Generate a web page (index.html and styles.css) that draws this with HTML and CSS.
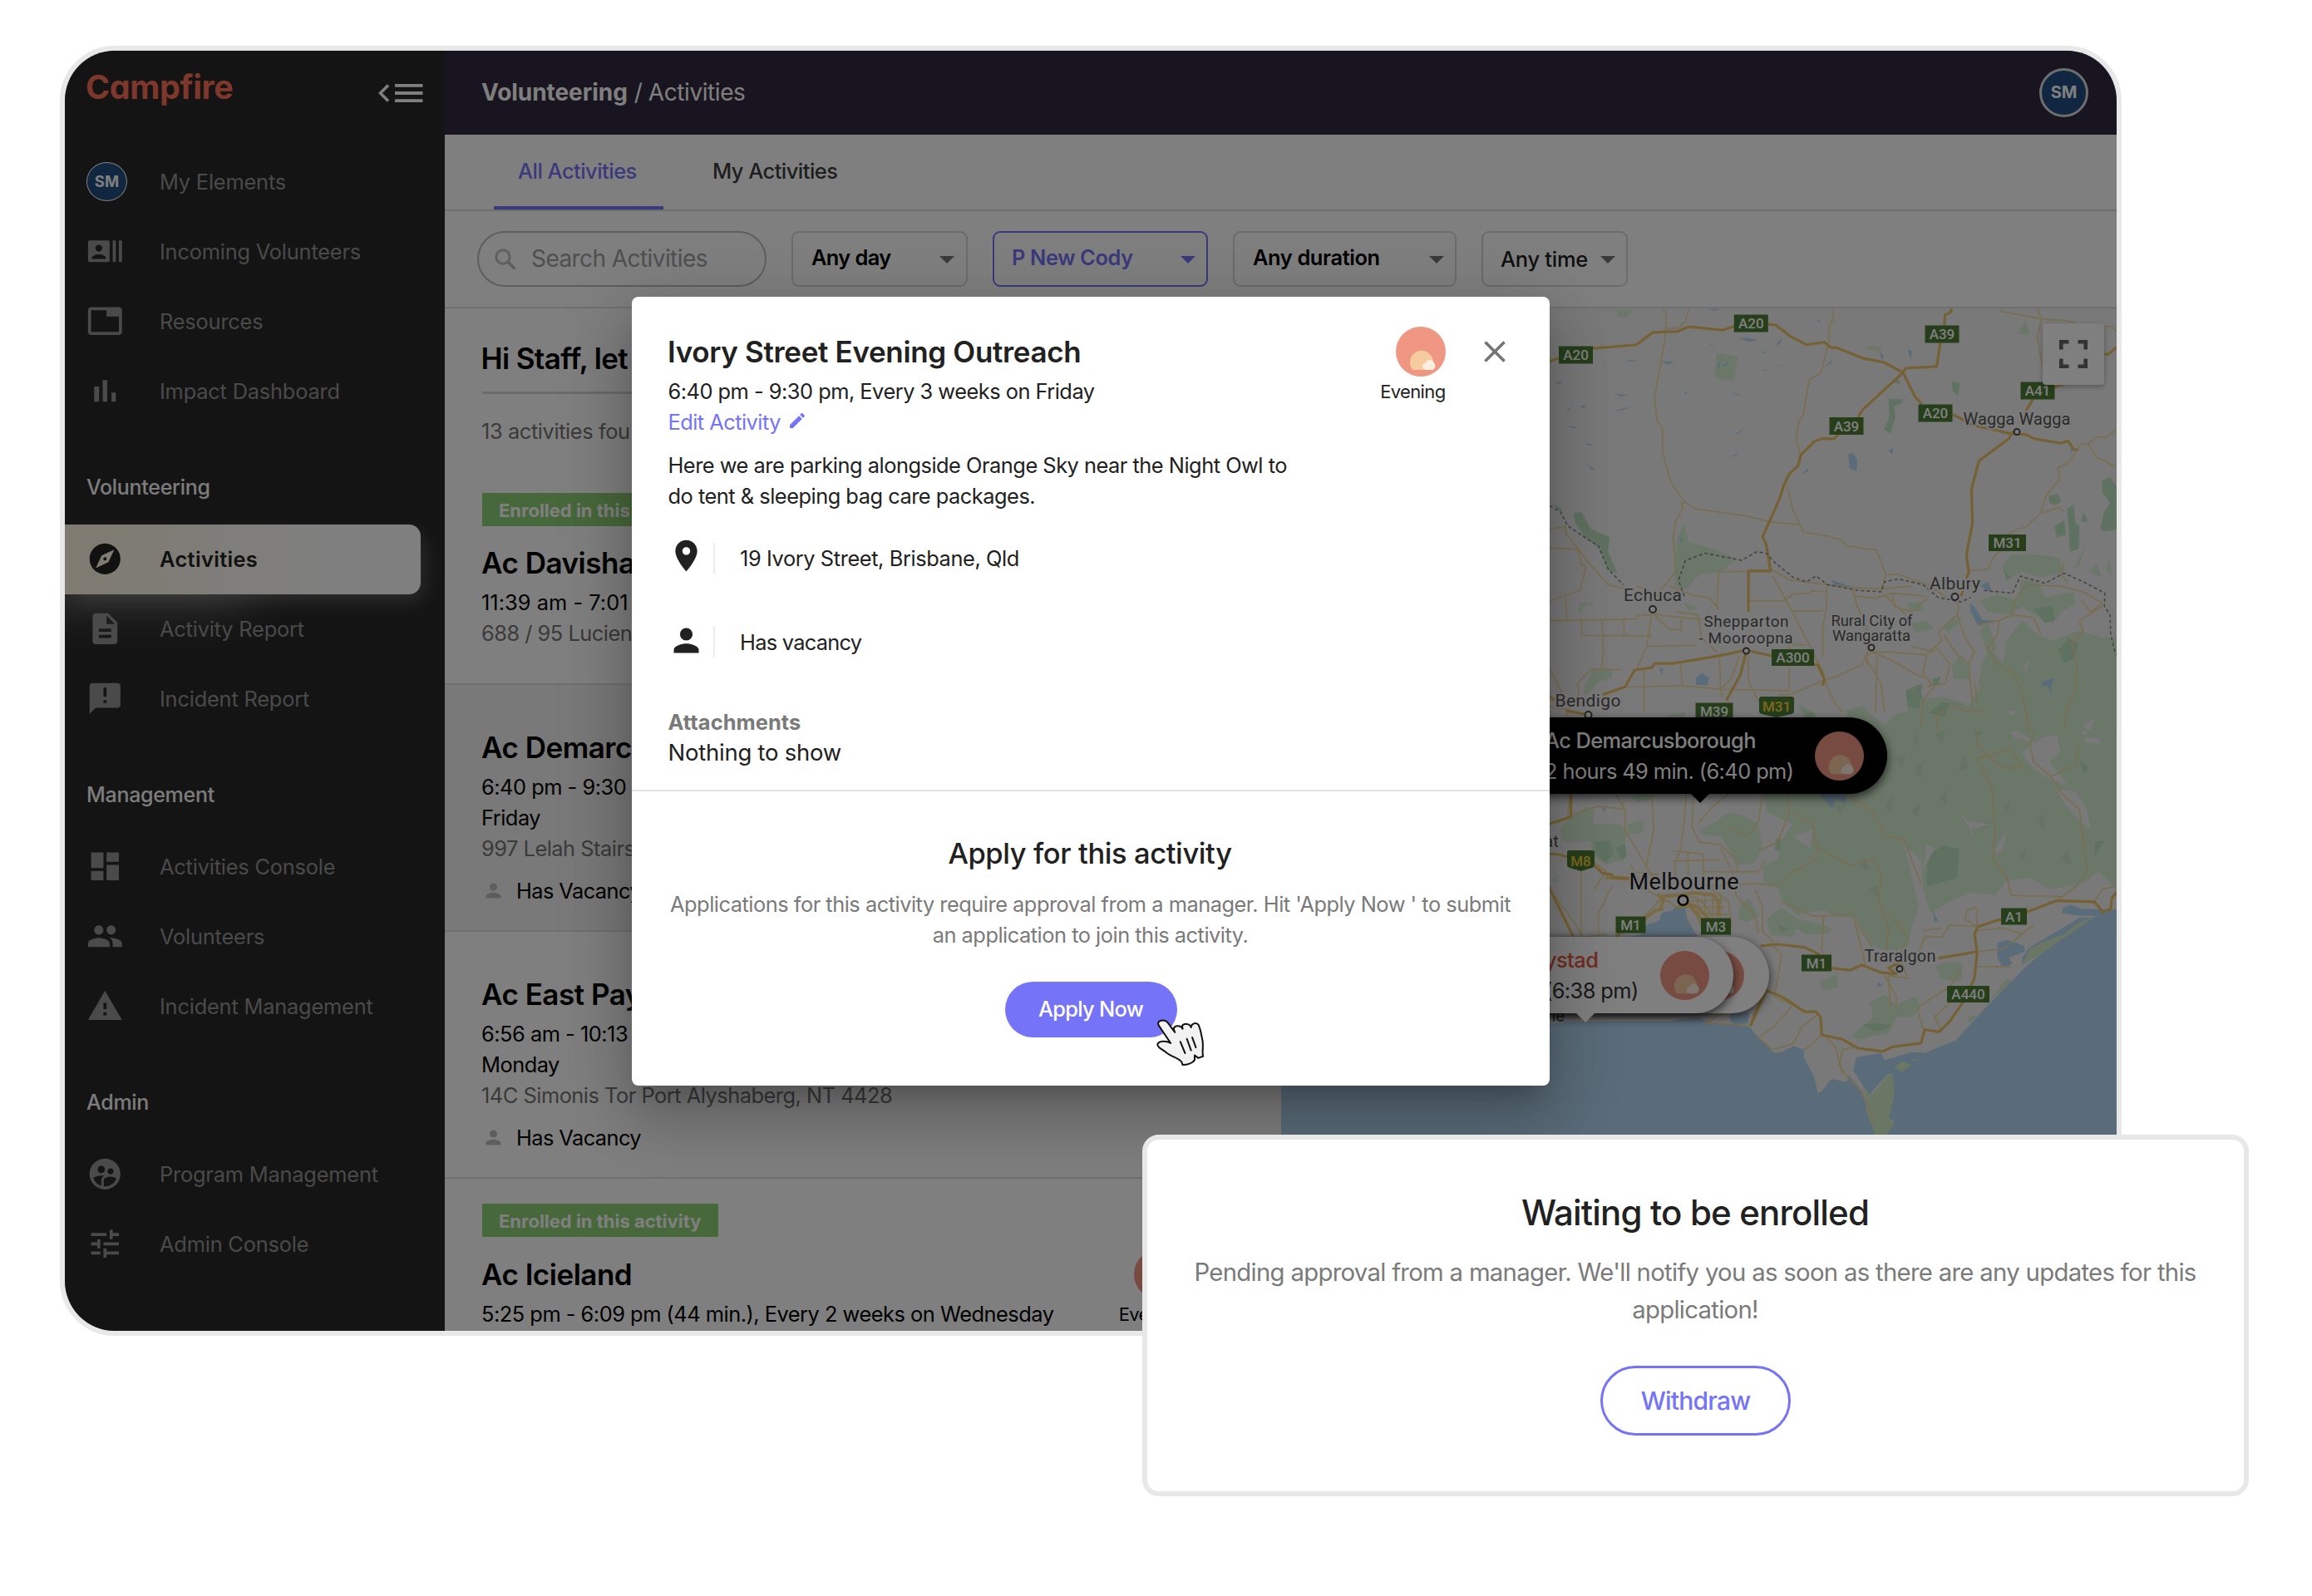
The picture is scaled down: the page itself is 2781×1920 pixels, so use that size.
FILE: index.html
```html
<!DOCTYPE html>
<html lang="en">
<head>
<meta charset="utf-8">
<title>Campfire – Activities</title>
<link rel="stylesheet" href="styles.css">
</head>
<body>
<svg class="defs" width="0" height="0">
  <symbol id="evening" viewBox="0 0 60 60">
    <circle cx="30" cy="30" r="30" fill="#ef9783"/>
    <path d="M20.4 52a14 14 0 1 1 21.2 0z" fill="#f6cba0"/>
    <path d="M35.3 52a4.5 4.5 0 0 1 .4-8.600a5.500 5.500 0 0 1 10-.4a5.600 5.600 0 0 1-1.200 9z" fill="#fcefe0"/>
  </symbol>
  <symbol id="person" viewBox="0 0 24 24"><path d="M12 12c2.210 0 4-1.790 4-4s-1.790-4-4-4-4 1.790-4 4 1.790 4 4 4zm0 2c-2.670 0-8 1.340-8 4v2h16v-2c0-2.660-5.330-4-8-4z"/></symbol>
</svg>
<div class="page">
  <div class="window">
    <aside class="sidebar">
      <div class="brand-row">
        <span class="brand">Campfire</span>
        <svg class="collapse" viewBox="0 0 54 22"><path d="M12 1.500 2.500 11 12 20.500" fill="none" stroke="#fff" stroke-width="3.600"/><path d="M20 0h33.500v3.800H20zM20 9.100h33.500v3.800H20zM20 18.200h33.500V22H20z" fill="#fff"/></svg>
      </div>
      <nav class="nav">
        <a class="item"><span class="avatar small">SM</span>My Elements</a>
        <a class="item"><svg class="ico" viewBox="0 0 24 24"><path d="M21 5v14h2V5h-2zm-4 14h2V5h-2v14zM14 5H2c-.55 0-1 .45-1 1v12c0 .55.45 1 1 1h12c.55 0 1-.45 1-1V6c0-.55-.45-1-1-1zM8 7.750c1.240 0 2.250 1.010 2.250 2.250S9.240 12.250 8 12.250 5.750 11.240 5.750 10 6.760 7.750 8 7.750zM12.500 17h-9v-.75c0-1.500 3-2.250 4.500-2.250s4.500.75 4.500 2.250V17z"/></svg>Incoming Volunteers</a>
        <a class="item"><svg class="ico" viewBox="0 0 24 24"><path d="M21 3H3c-1.100 0-2 .9-2 2v14c0 1.100.9 2 2 2h18c1.100 0 2-.9 2-2V5c0-1.100-.9-2-2-2zm0 16H3V5h10v4h8v10z"/></svg>Resources</a>
        <a class="item"><svg class="ico" viewBox="0 0 24 24"><path d="M5 9.200h3.200V19H5zM10.500 5h3v14h-3zm5.700 8H19v6h-2.800z"/></svg>Impact Dashboard</a>
        <h2>Volunteering</h2>
        <a class="item active"><svg class="ico" viewBox="0 0 24 24"><path d="M12 10.900c-.61 0-1.100.49-1.100 1.100s.49 1.100 1.100 1.100c.61 0 1.100-.49 1.100-1.100s-.49-1.100-1.100-1.100zM12 2C6.480 2 2 6.480 2 12s4.480 10 10 10 10-4.480 10-10S17.520 2 12 2zm2.190 12.190L6 18l3.810-8.190L18 6l-3.810 8.190z"/></svg>Activities</a>
        <a class="item"><svg class="ico" viewBox="0 0 24 24"><path d="M14 2H6c-1.100 0-1.990.9-1.990 2L4 20c0 1.100.89 2 1.990 2H18c1.100 0 2-.9 2-2V8l-6-6zm2 16H8v-2h8v2zm0-4H8v-2h8v2zm-3-5V3.500L18.500 9H13z"/></svg>Activity Report</a>
        <a class="item"><svg class="ico" viewBox="0 0 24 24"><path fill-rule="evenodd" d="M20 2H4c-1.100 0-2 .9-2 2v18l4-4h14c1.100 0 2-.9 2-2V4c0-1.100-.9-2-2-2zM11 13h2v2h-2zM12 4.700a1 1 0 0 1 1 1V10a1 1 0 0 1-2 0V5.700a1 1 0 0 1 1-1z"/></svg>Incident Report</a>
        <h2>Management</h2>
        <a class="item"><svg class="ico" viewBox="0 0 24 24"><path d="M3 13h8V3H3v10zm0 8h8v-6H3v6zm10 0h8V11h-8v10zm0-18v6h8V3h-8z"/></svg>Activities Console</a>
        <a class="item"><svg class="ico" viewBox="0 0 24 24"><path d="M16 11c1.660 0 2.990-1.340 2.990-3S17.660 5 16 5c-1.660 0-3 1.340-3 3s1.340 3 3 3zm-8 0c1.660 0 2.990-1.340 2.990-3S9.660 5 8 5C6.340 5 5 6.340 5 8s1.340 3 3 3zm0 2c-2.330 0-7 1.170-7 3.500V19h14v-2.500c0-2.330-4.670-3.500-7-3.500zm8 0c-.29 0-.62.02-.97.05 1.160.84 1.970 1.970 1.970 3.450V19h6v-2.500c0-2.330-4.670-3.500-7-3.500z"/></svg>Volunteers</a>
        <a class="item"><svg class="ico" viewBox="0 0 24 24"><path d="M1 21h22L12 2 1 21zm12-3h-2v-2h2v2zm0-4h-2v-4h2v4z"/></svg>Incident Management</a>
        <h2>Admin</h2>
        <a class="item"><svg class="ico" viewBox="0 0 24 24"><path d="M11.990 2c-5.520 0-10 4.480-10 10s4.480 10 10 10 10-4.480 10-10-4.480-10-10-10zm3.610 6.340c1.070 0 1.930.86 1.930 1.930 0 1.070-.86 1.930-1.930 1.930-1.070 0-1.930-.86-1.930-1.930-.01-1.070.86-1.930 1.930-1.930zm-6-1.580c1.300 0 2.360 1.060 2.360 2.360 0 1.300-1.060 2.360-2.360 2.360s-2.360-1.060-2.360-2.360c0-1.310 1.050-2.360 2.360-2.360zm0 9.130v3.750c-2.400-.75-4.300-2.600-5.140-4.960 1.050-1.120 3.670-1.690 5.140-1.690.53 0 1.200.08 1.900.22-1.640.87-1.900 2.020-1.900 2.680zM11.990 20c-.27 0-.53-.01-.79-.04v-4.070c0-1.420 2.940-2.130 4.400-2.130 1.070 0 2.920.39 3.840 1.150-1.170 2.970-4.060 5.090-7.450 5.090z"/></svg>Program Management</a>
        <a class="item"><svg class="ico" viewBox="0 0 24 24"><path d="M3 17v2h6v-2H3zM3 5v2h10V5H3zm10 16v-2h8v-2h-8v-2h-2v6h2zM7 9v2H3v2h4v2h2V9H7zm14 4v-2H11v2h10zm-6-4h2V7h4V5h-4V3h-2v6z"/></svg>Admin Console</a>
      </nav>
    </aside>

    <main class="main">
      <header class="topbar">
        <div class="crumbs"><b>Volunteering</b><span class="slash">/</span><span class="leaf">Activities</span></div>
        <span class="avatar large">SM</span>
      </header>
      <div class="tabs"><span class="tab on">All Activities</span><span class="tab">My Activities</span></div>
      <div class="filters">
        <div class="search"><svg viewBox="0 0 26 26"><circle cx="10" cy="10" r="8.200" fill="none" stroke="#bdbdbd" stroke-width="3"/><path d="m16 16 8.500 8.500" stroke="#bdbdbd" stroke-width="3.600"/></svg>Search Activities</div>
        <div class="select day">Any day<i></i></div>
        <div class="select program">P New Cody<i></i></div>
        <div class="select duration">Any duration<i></i></div>
        <div class="select time">Any time<i></i></div>
      </div>
      <div class="content">
        <section class="list">
          <div class="greet">Hi Staff, let</div>
          <div class="count">13 activities fou</div>
          <article class="card enrolled">
            <div class="info"><span class="badge">Enrolled in this activity</span>
            <h3>Ac Davisha</h3><p class="wide">11:39 am - 7:01</p><p class="addr">688 / 95 Lucien</p></div>
          </article>
          <article class="card selected">
            <div class="info"><h3>Ac Demarc</h3><p>6:40 pm - 9:30</p><p>Friday</p><p class="addr">997 Lelah Stairs</p>
            <div class="vacancy"><svg><use href="#person"/></svg>Has Vacancy</div></div>
          </article>
          <article class="card">
            <div class="info"><h3>Ac East Pay</h3><p>6:56 am - 10:13</p><p>Monday</p><p class="addr">14C Simonis Tor Port Alyshaberg, NT 4428</p>
            <div class="vacancy"><svg><use href="#person"/></svg>Has Vacancy</div></div>
          </article>
          <article class="card enrolled">
            <div class="info"><span class="badge">Enrolled in this activity</span>
            <h3>Ac Icieland</h3><p>5:25 pm - 6:09 pm (44 min.), Every 2 weeks on Wednesday</p></div>
            <div class="period"><svg><use href="#evening"/></svg>Evening</div>
          </article>
        </section>

        <section class="map">
          <svg class="terrain" viewBox="1541 371 1005 1230">
            <rect x="1541" y="371" width="1005" height="1230" fill="#f3f3f3"/>
            <!-- forests, south -->
            <g transform="translate(1840 820) scale(.4592 .3571)">
              <g fill="#d6f0d2">
                <path d="M830 100 870 80 930 150 960 110 1000 100 1020 60 1080 50 1150 80 1180 20 1240 0H1537V700L1490 640 1450 680 1360 700 1310 660 1250 670 1220 720 1160 710 1100 740 1050 780 1030 700 1025 600 990 560 980 545 1020 760 1000 830 990 900 930 905 890 880 860 800 800 790 770 770 700 785 660 740 650 690 615 680 610 620 650 600 655 540 690 480 620 440 610 370H830Z"/>
                <path d="M445 500 490 470 520 440 560 450 600 480 610 560 590 610 540 620 530 580 500 520 450 515ZM95 470 150 420 170 430 165 480 235 480 255 500 245 600 200 615 165 590 160 540 90 540 80 500ZM260 380 320 375 315 400 280 405ZM620 800 660 760 700 800 740 810 790 830 785 850 720 850 700 830 690 860 630 855ZM1065 960 1090 945 1135 950 1130 1010 1075 1000ZM760 1010 805 985 808 1030 770 1040ZM845 1190 900 1130 890 1080 930 1055 960 1090 1010 1060 1025 1100 1000 1130 960 1130 940 1185 890 1195 860 1210ZM555 740 575 730 600 790 570 810 545 800ZM55 665 75 655 70 680ZM255 480 300 465 295 510 260 515Z"/>
                <path d="M940 1320 950 1320 955 1390 940 1470 955 1490 935 1525 900 1525 895 1470 890 1440 870 1355 900 1390ZM955 1290 1000 1285 985 1315ZM1070 1230 1115 1210 1090 1240 1040 1250Z"/>
              </g>
              <g fill="#bfe3c0">
                <path d="M1040 590 1085 550 1125 565 1120 660 1070 680 1040 690ZM225 560 250 545 255 590 240 600ZM170 540 210 535 220 580 200 610 170 580ZM645 530 658 530 655 570 642 565ZM870 1155 915 1150 950 1160 910 1180ZM650 820 680 830 660 845ZM985 30 1020 10 1030 60 990 90ZM1040 110 1080 70 1125 75 1100 105 1060 130ZM1440 260 1465 290 1450 310ZM1480 540 1505 535 1480 590Z"/>
              </g>
              <g fill="#cde6c9">
                <path d="M960 260 985 240 975 290ZM1005 300 1030 270 1025 330ZM930 420 950 380 945 450ZM1000 440 1025 400 1015 460ZM1060 180 1090 160 1080 210ZM1120 300 1140 250 1150 290ZM1180 480 1205 470 1190 500ZM1280 590 1300 560 1295 610ZM1330 480 1345 440 1350 500ZM860 620 880 590 890 640ZM800 420 830 410 815 450ZM1075 390 1095 360 1090 420ZM1160 140 1190 170 1170 200ZM1390 600 1410 570 1420 620ZM1240 420 1260 400 1255 440ZM1000 200 1015 170 1020 220ZM890 700 910 680 915 730Z"/>
              </g>
              <g fill="#f3f3f3">
                <path d="M1250 110 1275 105 1280 170 1310 190 1330 220 1305 200 1270 190 1255 150ZM1290 240 1340 190 1380 180 1390 240 1360 270 1400 330 1405 350 1350 320 1310 280ZM1380 360 1430 370 1460 430 1470 500 1440 470 1400 410ZM1440 160 1465 120 1480 140 1455 180ZM1130 450 1150 470 1205 480 1150 500 1170 530ZM1210 580 1250 500 1240 570ZM1450 190 1490 190 1495 210 1460 205ZM980 545 1010 600 1015 680 995 620ZM1030 640 1060 560 1040 550ZM690 520 740 500 735 560 710 540ZM1090 0 1120 0 1140 60 1110 50Z"/>
              </g>
              <!-- water, south -->
              <g fill="#b5d8f3">
                <path d="M-700 1145H370L385 1140 440 1130 465 1145 530 1155 575 1162 600 1200 640 1250 660 1248 690 1228 712 1250 745 1330 755 1387 765 1380 790 1338 830 1350 835 1325 865 1370 880 1420 900 1500 905 1525 935 1525 955 1480 940 1470 955 1390 950 1320 940 1320 890 1390 870 1355 848 1310 855 1265 920 1252 930 1275 1000 1248 1035 1250 1115 1210 1200 1090 1300 960 1420 830 1480 792 1537 765V2200H-700Z"/>
                <path d="M380 757 408 760 412 800 440 860 500 960 540 1110 440 1118 260 1110V862L290 850 305 820 340 805 345 780 375 770ZM525 1120 575 1112 572 1150 540 1158 525 1145Z"/>
                <path d="M1225 880 1250 870 1295 890 1297 910 1255 930 1265 950 1240 965 1225 930ZM1395 765 1415 752 1445 765 1537 770 1480 790 1440 788 1395 780ZM1310 895 1370 850 1440 795 1470 795 1360 895 1290 955 1290 930ZM750 370 830 378 828 410 800 395 795 430ZM1055 770 1070 808 1060 808ZM745 655 758 670ZM912 1010 925 1025 912 1028ZM690 1228 720 1240 718 1262ZM190 430 203 420 195 440ZM1340 0 1365 0 1375 70 1362 30Z"/>
              </g>
              <path d="M1290 950 1310 900 1340 880 1400 850 1440 810 1480 792 1330 925ZM1200 1080 1250 1000 1262 1010ZM1150 1130 1175 1125 1150 1150ZM955 1300 975 1280 1000 1290 975 1315ZM1000 1275 1018 1272 1008 1280ZM880 1440 925 1370 950 1320 955 1390 940 1470 955 1485 935 1525 905 1525Z" fill="#d6eecb"/>
              <path d="M370 1110 430 1115 400 1140ZM455 1140 520 1120 525 1150Z" fill="#f3f3f3"/>
              <!-- road network, south -->
              <g class="minor">
                <path d="M50 85 100 95 95 130M105 380 100 460M225 378 250 430 250 500 305 620M250 430 180 420 105 450M320 378 325 500 305 620 340 700M410 378 405 470 395 570 380 610 385 680M430 378 425 490 445 540 500 550 540 600 545 640M440 480 480 420 520 380M520 490 570 520 600 470 610 378M675 378 680 440 650 540 600 570M690 440 740 480 755 560 750 600 690 640 650 690M755 560 840 620 900 600 920 650 915 740 940 830 935 905M830 378 900 440 930 520 980 530 1000 600 1025 680M375 570 455 580 455 670M375 605 500 600M415 575 415 660M50 700 100 780 140 860M135 640V860M160 600 200 640 170 700M215 690 180 780V850M265 620 300 700 350 730 385 760M260 640 340 650M455 640 600 640 615 600M455 690 600 680 650 690M500 560 530 640 540 720 590 790 600 850M590 700 610 760 610 840 640 880M660 740 740 790 850 785 870 840 900 900M770 790 765 900 780 960M150 860 200 850M850 800 870 900 880 960M960 900 990 1000 940 990 945 1100M1170 825 1140 800 1145 770 1170 760 1172 825M1172 825 1100 820 1080 860 1035 860 1020 910M1030 840 1080 830M1172 910 1240 900 1320 820M1170 840 1240 830 1290 850M1165 960 1260 960M1170 210 1200 250 1260 230 1290 290 1240 290 1200 250 1170 260 1210 350 1220 500 1215 600 1250 660 1262 720M1310 210 1320 270 1365 320 1395 380 1440 430 1450 530 1460 640 1440 680 1380 740M1262 720 1400 725M1365 320 1430 280 1440 200M1310 120 1325 160 1310 210M1170 210 1180 120 1165 0M640 1060 690 1090 640 1160 600 1200 635 1240 690 1220 715 1160 755 1120M690 1090 725 1110M765 1190 740 1220 720 1240M770 1190 800 1230 820 1320M855 1230 820 1240 810 1290 830 1330 870 1380 890 1440 905 1490M1030 1170 1015 1100 1060 1060 1100 1030 1130 970M1080 1180 1060 1130 1120 1060M930 990 960 1060 960 1110M450 1000 560 1080 460 1150 570 1158M940 780 990 860 970 920M1480 740 1500 700 1530 690M630 880 660 920 650 1000 640 1060M580 1160 610 1080 620 1040"/>
                <path d="M320 700 380 690 480 700 520 740 530 830M340 720 390 715 440 730 470 770 490 830M400 720 430 770 460 850M420 740 500 735M430 760 510 760M440 780 520 785M450 800 525 805M440 730V800M460 720V830M480 710V840M500 710V850M330 740 370 740M300 790 340 740"/>
              </g>
              <g class="city"><path d="M335 715 350 740 340 770M345 725 385 720 430 712 480 718 495 740 492 790M385 760 420 755 450 800 470 830M400 740 440 760 470 800M200 660 260 665M300 800 330 770 350 765"/></g>
              <g class="major"><path d="M50 480 108 455 108 378M50 690 80 770 115 860M50 580 75 582 125 600M170 620 190 645 215 650 218 660 260 662 300 700M605 890 650 885 720 895 760 920M790 965 840 972 870 955 920 980 960 985 940 965 970 945M1070 932 1170 910M1235 800 1175 825 1165 850 1172 910 1165 1000 1135 1080 1100 1145 1072 1180 1035 1172 1025 1218 950 1230 925 1246 860 1235 820 1205 765 1190 762 1130 750 1112 720 1112 665 1065 620 1040 600 1090 578 1160M1300 777 1380 738 1480 742 1502 777 1522 765 1525 730 1537 710M225 860 245 840"/></g>
            </g>
            <!-- forests and lakes, north -->
            <g transform="translate(1840 340) scale(.4592 .3444)">
              <g fill="#d6f0d2">
                <path d="M1200 1290 1185 1330 1175 1400 1200 1440 1160 1480 1100 1470 1085 1520 1040 1500 1010 1400 990 1480 985 1568H1537V1240H1500L1440 1215 1370 1250 1330 1230 1290 1180 1250 1250 1240 1330 1215 1290Z"/>
                <path d="M490 245 545 258 535 345 484 332ZM405 835 385 900 380 1060 410 1070 445 1020 500 1010 545 965 480 930 415 905ZM1240 990 1260 950 1330 950 1385 960 1400 1010 1340 1030 1290 1010 1250 1040ZM1285 1040 1330 1040 1350 1100 1425 1080 1430 1120 1395 1150 1370 1190 1320 1160 1290 1130 1260 1160 1200 1150 1180 1110 1225 1090 1280 1110ZM130 1120 168 1115 165 1125 140 1130 138 1155 128 1155ZM165 1350 218 1350 215 1380 180 1395 150 1440 140 1430ZM400 1115 440 1135 420 1150ZM990 1120 1025 1115 1030 1150 995 1145ZM1000 1190 1040 1180 1060 1210 1010 1225ZM1085 1210 1105 1170 1125 1190 1095 1220ZM1105 1340 1130 1300 1150 1340 1155 1385 1110 1385ZM1180 1215 1200 1190 1225 1280 1200 1300ZM875 222 918 222 920 240 880 232ZM1278 180 1300 130 1310 183ZM230 95 272 95 252 122 229 118ZM830 1490 880 1500 930 1568H840ZM360 1510 410 1500 400 1530 360 1530ZM700 1470 755 1510 730 1540ZM1425 1000 1455 920 1440 990ZM1465 1010 1485 980 1500 1030ZM1510 1000 1520 960 1525 1030Z"/>
              </g>
              <g fill="#bfe3c0">
                <path d="M115 805 135 800 160 860 210 890 205 940 230 1015 205 1005 185 930 145 890 120 840ZM52 765 88 795 75 795ZM940 405 978 408 972 425 955 430 958 470 945 528 928 512 942 470ZM1105 345 1127 352 1122 395 1108 380ZM1500 690 1520 680 1537 710V860L1510 870 1495 860 1505 800 1520 770 1500 730ZM1360 745 1385 738 1392 765 1375 778 1362 770ZM1375 850 1400 830 1405 880 1380 890ZM1408 790 1425 775 1430 840 1440 850 1438 930 1415 940 1412 850ZM1450 800 1462 835 1445 835ZM1385 1285 1410 1240 1435 1260 1430 1310 1400 1330ZM1320 1140 1370 1130 1375 1180 1350 1190ZM990 1440 1028 1400 1020 1490 990 1480ZM1055 1385 1078 1375 1070 1400 1058 1405ZM945 350 965 335 972 352ZM1240 1000 1260 1030 1250 1040ZM710 1520 740 1500 750 1530ZM1130 1080 1105 1070Z"/>
              </g>
              <g fill="#f3f3f3"><path d="M1250 1490 1278 1500 1260 1515ZM1450 1550 1480 1520 1470 1568ZM1290 1340 1310 1320 1300 1360Z"/></g>
              <g fill="#b5d8f3">
                <path d="M834 598 848 595 858 620 857 658 838 650ZM1153 1120 1165 1130 1185 1178 1225 1180 1175 1200 1155 1150ZM435 1380 450 1365 470 1380 465 1405 435 1405ZM790 1038 848 1065 800 1060ZM1180 1060 1200 1045 1213 1085ZM1340 1395 1378 1380 1365 1410 1370 1455 1358 1410 1342 1410ZM340 1345 350 1350 345 1372ZM465 92 500 92 485 98ZM548 193 568 193 597 200 575 207ZM463 210 475 215 490 228ZM640 222 660 195 657 212ZM607 248 625 235 615 248ZM640 290 672 288 650 292ZM607 303 628 305 615 308ZM250 275 285 275 265 270ZM340 275 380 275 365 285ZM64 347 86 348 78 354ZM404 390 415 375 412 390ZM525 380 558 396 540 392ZM220 388 260 393 240 398ZM220 450 270 430 245 445ZM90 455 112 430 105 445ZM130 430 152 430 140 438ZM100 500 125 505 115 510ZM530 535 562 510 550 525ZM525 612 548 592 540 605ZM145 562 175 567 155 569ZM150 632 172 655 160 652ZM712 667 732 645 727 660ZM767 300 797 265 790 280ZM745 125 764 137 758 139ZM990 232 1002 240 998 270ZM940 585 952 578 950 602ZM915 240 928 255 922 270ZM490 290 500 275 497 298ZM505 290 525 273 515 290ZM1415 575 1425 580 1420 595ZM392 880 402 905 395 905Z"/>
              </g>
              <g class="minor">
                <path d="M348 90 358 110 354 200 327 400 333 480 348 508V590L370 700 408 768 435 790 565 815 628 835 710 847M418 90 408 135 390 158 355 160M408 768 398 770 402 785 382 835 376 890 383 1010 322 1110M796 90 795 130 785 145 784 205 763 315 732 340 717 460 705 485 698 545 709 600M673 706 690 795 718 872 780 885 815 898 832 920 909 934 933 1020 920 1080M1232 90 1235 100 1340 127 1400 132 1430 140M1330 90 1340 127 1329 190 1345 300M1435 585 1410 630 1383 647 1389 687 1352 745 1340 802 1300 855 1280 860 1250 880M1230 940 1215 960 1200 1002 1150 1006M1435 585 1445 563 1463 562 1485 540 1510 540 1537 512M1463 562 1487 612 1510 625 1525 640 1537 637M1505 152 1525 155 1537 170M1345 805 1385 785 1400 800"/>
                <path d="M50 923 65 928 128 932 165 995 205 1055 250 1070M50 865 93 850 96 880 128 932 135 985 148 990 132 1075 50 1113M93 1087 97 1180M50 1181 280 1175 282 1164 322 1160M247 1175V1232M136 1181V1232L320 1234M190 1181 193 1290 188 1353M322 1135 307 1270 280 1353M307 1270 437 1267M397 1175V1215L365 1210 325 1160M322 1155 360 1165 460 1178M495 1010 631 1007M495 1010 490 1140M370 1060 425 1092 470 1100 495 1140M573 1112H665M637 1025 700 1180 772 1370M631 1000 685 1040 760 1052 838 1065 920 1070 1000 1060M665 1112 690 1088 735 1085 738 1077 778 1080M778 1060V1130L768 1200V1310M690 1147H768M845 1070 858 1130 880 1200 892 1270 870 1335 805 1375 770 1390 725 1415 680 1440 650 1440M250 1412 400 1408 500 1421 680 1425M395 1330 400 1408M300 1353V1500M497 1305 500 1421M680 1345V1420M573 1290V1390L600 1465M850 1095 905 1102 950 1085 1040 1095M933 1022 965 1018 1050 1060 1090 1100M950 1085 955 1130 1000 1150 1045 1100M930 1090 985 1160M1114 1115 1125 1130 1120 1160 1070 1220 1080 1250 1040 1300 1030 1370 1060 1410 1030 1460 1025 1550M1120 1160 1140 1240 1165 1290 1150 1330M895 1290 950 1320 1000 1360 1030 1380M895 1290 880 1310 920 1400 930 1500M1175 1195 1230 1180 1225 1230 1200 1280 1225 1330 1270 1370 1290 1430 1310 1568M1230 1180 1265 1160 1270 1110 1300 1060M1265 1160 1320 1170 1340 1230M1435 1350 1420 1260 1450 1220 1440 1180 1500 1130M1435 1350 1430 1430 1405 1500 1400 1568M1300 1055 1390 1060 1450 1080 1500 1120 1470 1150 1445 1110M1400 980 1390 1015 1410 1050M52 1350 100 1470 105 1490M130 1460 125 1400 160 1350 190 1350 240 1352M120 1480 160 1470M280 1060 320 1080M385 1150 440 1160 450 1240 490 1290M550 1300 530 1380 500 1421M1060 1270 1100 1330 1090 1400 1040 1410M1085 1230 1120 1300 1150 1330 1160 1480M1000 1270 1060 1290M1070 1568 1065 1510 1110 1480 1150 1500 1195 1490"/>
                <path d="M895 1290 940 1290 1040 1300M880 1300 885 1335M910 1310 905 1500M770 1385 800 1470 820 1500M500 1421 505 1450M680 1265 680 1300M725 1265H690"/>
              </g>
              <g class="major">
                <path d="M50 275 75 265M165 230 280 217 322 174 388 170 417 154 505 166 540 150M620 145 645 148 682 187 725 217 772 208 788 226 805 228 873 264 927 278 978 314M1105 90 1103 103 1088 113 1086 150M1076 208 1066 293 985 299 978 314 873 443 860 470M810 527 797 546 765 545 745 555 710 603 703 640 680 668 666 706 656 750 610 888 619 912 631 1007H573V1150M978 314 1010 400 1028 425M1108 460 1160 497 1262 528 1300 530 1320 545 1390 561 1410 553 1425 582 1435 585M1318 408 1300 448M1276 510 1262 528 1255 545 1177 622 1157 722 1160 840 1144 950 1150 1010 1130 1095M1505 250H1517L1537 225M1375 365 1410 350M190 1440 250 1412 275 1353 320 1345 328 1330 375 1330 490 1305 567 1284 640 1305M740 1335H755L772 1385 767 1408M567 1290 552 1370 515 1460M50 1443 65 1460M95 1495 153 1510"/>
              </g>
              <path class="border" d="M52 780 80 800 100 850 150 895 180 920 205 1000 245 1055M405 1095 390 1040 408 970 460 945 555 970 595 940 620 945 640 975 690 1030 725 1045 750 1025 780 1055 860 1075 920 1080 930 1045 965 1035 1030 1055 1070 1100 1130 1115 1155 1100M1190 1075 1265 1085 1285 1025 1350 1050 1400 1015 1450 1045 1507 1085 1505 1130 1520 1160 1522 1230 1535 1300"/>
            </g>
            <!-- road shields -->
            <g class="shield">
              <rect x="2085.800" y="378.500" width="41" height="21"/><rect x="1875" y="416.500" width="41" height="21"/><rect x="2315.500" y="391.500" width="41" height="21"/><rect x="2430.500" y="459.500" width="41" height="21"/><rect x="2307.500" y="486.500" width="41" height="21"/><rect x="2200.500" y="502" width="41" height="21"/><rect x="2392" y="643" width="45" height="20"/><rect x="2131" y="781" width="51" height="20"/><rect x="2039.500" y="845.500" width="45" height="20"/><rect x="1943.500" y="1102.500" width="36" height="20"/><rect x="2046" y="1104.500" width="36" height="20"/><rect x="2167" y="1148.500" width="36" height="20"/><rect x="2407" y="1092.500" width="31" height="20"/><rect x="2342" y="1186" width="51" height="20"/>
              <path d="M2119 838h36q3 0 3 3v15q0 2-3 3l-18 4-18-4q-3-1-3-3v-15q0-3 3-3zM1887 1023h29q2 0 2 3v15q0 2-3 3l-13.500 4-13.500-4q-3-1-3-3v-15q0-3 2-3z"/>
              <text x="2106.300" y="395">A20</text><text x="1895.600" y="433">A20</text><text x="2336" y="408">A39</text><text x="2451" y="476">A41</text><text x="2328" y="503">A20</text><text x="2221" y="518.500">A39</text><text x="2414.500" y="659">M31</text><text x="2156.500" y="797">A300</text><text x="2062" y="861.500">M39</text><text x="1961.500" y="1118.500">M1</text><text x="2064" y="1120.500">M3</text><text x="2185" y="1164.500">M1</text><text x="2422.500" y="1108.500">A1</text><text x="2367.500" y="1202">A440</text>
              <text x="2137" y="856" class="gold">M31</text><text x="1901.500" y="1042" class="gold">M8</text>
            </g>
            <!-- places -->
            <g class="place">
              <text x="2426" y="511" font-size="20" textLength="129">Wagga Wagga</text><circle cx="2426" cy="519.500" r="3.500"/>
              <text x="1988" y="723" font-size="21" textLength="70">Echuca</text><circle cx="1988" cy="733" r="4"/>
              <text x="2351.500" y="708.500" font-size="21" textLength="61">Albury</text><circle cx="2351.500" cy="718" r="4"/>
              <text x="2100.500" y="753.500" font-size="19" textLength="102">Shepparton</text><text x="2100" y="773.500" font-size="19" textLength="113">- Mooroopna</text><circle cx="2100.500" cy="783" r="3.500"/>
              <text x="2251.500" y="752.500" font-size="18.500" textLength="98">Rural City of</text><text x="2251" y="771" font-size="18.500" textLength="94">Wangaratta</text><circle cx="2251" cy="779" r="3.500"/>
              <text x="1910" y="850" font-size="21" textLength="79">Bendigo</text><circle cx="1910.500" cy="860" r="4"/>
              <text x="2025.500" y="1069.500" font-size="27" textLength="132" class="capital">Melbourne</text><circle cx="2024.500" cy="1083" r="5.800" class="capital-dot"/>
              <text x="2285.500" y="1157" font-size="20" textLength="86">Traralgon</text><circle cx="2285" cy="1165.500" r="3.500"/>
              <text x="1866" y="1019" font-size="20">at</text><text x="1871" y="1229" font-size="20">ne</text>
            </g>
          </svg>
          <div class="pin dark"><div><b>Ac Demarcusborough</b><br>2 hours 49 min. (6:40 pm)</div><svg><use href="#evening"/></svg></div>
          <div class="pin behind"><svg><use href="#evening"/></svg></div>
          <div class="pin light"><div><b>ystad</b><br>(6:38 pm)</div><svg><use href="#evening"/></svg></div>
          <div class="fullscreen"><svg viewBox="0 0 34 34"><path d="M2.300 11.500V2.300h9.200M22.500 2.300h9.200v9.200M31.700 22.500v9.200h-9.200M11.500 31.700H2.300v-9.200" fill="none" stroke="#666" stroke-width="4.600"/></svg></div>
        </section>
      </div>
    </main>

    <div class="backdrop">
      <div class="modal">
        <div class="head">
          <div class="titles">
            <h1>Ivory Street Evening Outreach</h1>
            <p>6:40 pm - 9:30 pm, Every 3 weeks on Friday</p>
            <a class="edit">Edit Activity<svg viewBox="3 3 18 18"><path d="M3 17.250V21h3.750L17.810 9.940l-3.750-3.750L3 17.250zM20.710 7.040c.39-.39.39-1.020 0-1.410l-2.340-2.340c-.39-.39-1.020-.39-1.410 0l-1.830 1.830 3.750 3.750 1.830-1.830z"/></svg></a>
          </div>
          <div class="period"><svg><use href="#evening"/></svg>Evening</div>
          <svg class="close" viewBox="0 0 24 24"><path d="M19 6.410 17.590 5 12 10.590 6.410 5 5 6.410 10.590 12 5 17.590 6.410 19 12 13.410 17.590 19 19 17.590 13.410 12z"/></svg>
        </div>
        <p class="desc">Here we are parking alongside Orange Sky near the Night Owl to<br>do tent &amp; sleeping bag care packages.</p>
        <div class="fact where"><svg viewBox="0 0 24 24"><path d="M12 2C8.130 2 5 5.130 5 9c0 5.250 7 13 7 13s7-7.750 7-13c0-3.870-3.130-7-7-7zm0 9.500c-1.380 0-2.500-1.120-2.500-2.500s1.120-2.500 2.500-2.500 2.500 1.120 2.500 2.500-1.120 2.500-2.500 2.500z"/></svg><span>19 Ivory Street, Brisbane, Qld</span></div>
        <div class="fact who"><svg><use href="#person"/></svg><span>Has vacancy</span></div>
        <div class="attach"><b>Attachments</b><span>Nothing to show</span></div>
        <div class="apply">
          <h2>Apply for this activity</h2>
          <p>Applications for this activity require approval from a manager. Hit 'Apply Now ' to submit<br>an application to join this activity.</p>
          <div class="button">Apply Now
            <svg class="cursor" viewBox="1388 1223 64 62"><g transform="translate(760 820) scale(.7207 .3444)"><path d="M885 1180C877 1180 876 1190 878 1198L898 1260C890 1250 878 1252 876 1264 875 1275 885 1282 892 1295 900 1308 912 1312 916 1325L918 1336C926 1336 936 1328 938 1318V1302L944 1312 952 1306C950 1290 953 1270 951 1250 949 1230 948 1210 944 1195 940 1186 932 1192 932 1205 930 1190 920 1190 917 1200L918 1210C914 1195 903 1197 903 1212L905 1222 893 1188C891 1183 889 1180 885 1180Z"/><path class="crease" d="M914 1255 922 1295M925 1245 932 1285M934 1240 940 1275"/></g></svg>
          </div>
        </div>
      </div>
    </div>
  </div>

  <div class="waiting">
    <h2>Waiting to be enrolled</h2>
    <p>Pending approval from a manager. We'll notify you as soon as there are any updates for this<br>application!</p>
    <div class="withdraw">Withdraw</div>
  </div>
</div>
</body>
</html>
```
FILE: styles.css
```css
* { box-sizing: border-box; }
body, h1, h2, h3, p { margin: 0; }
body { background: #fff; font-family: Inter, "Liberation Sans", sans-serif; font-size: 25.4px; line-height: 37px; letter-spacing: -.02em; color: #212121; }
.defs { position: absolute; }
.page { position: relative; width: 2781px; height: 1920px; padding: 55px 0 0 72px; overflow: hidden; }

.window { position: relative; display: flex; width: 2480px; height: 1552px; border: 6px solid #e8e8e8; border-radius: 66px; overflow: hidden; background: #fff; }

/* sidebar */
.sidebar { width: 457px; flex: none; background: #282828; }
.brand-row { display: flex; justify-content: space-between; align-items: flex-start; height: 115.500px; padding: 20px 26px 0 25px; }
.brand { font-size: 39.500px; line-height: 48px; font-weight: 700; letter-spacing: -.01em; color: #fc6f56; font-feature-settings: "cv11"; }
.collapse { width: 54px; height: 22px; margin-top: 20px; }
.nav h2 { padding: 58.500px 0 29.500px 26px; font-size: 25px; line-height: 30px; font-weight: 500; letter-spacing: -.012em; color: #f8f8f8; }
.item { display: flex; align-items: center; height: 84px; padding-left: 26px; color: #949494; letter-spacing: -.008em; }
.ico { width: 44.600px; height: 44.600px; margin-right: 43.400px; fill: #949494; }
.active { margin-right: 29px; border-radius: 0 14px 14px 0; background: linear-gradient(90deg, #fff6e2, #fff 75%); color: #222; font-weight: 600; letter-spacing: .014em; box-shadow: 6px 10px 26px -4px rgba(255,255,255,.28), -190px 34px 60px -20px rgba(255,255,255,.3); }
.active .ico { fill: #222; }
.avatar { display: flex; align-items: center; justify-content: center; border-radius: 50%; background: #204d82; color: #fff; font-weight: 700; }
.small { width: 49px; height: 47px; margin-right: 39px; border: 1.500px solid #fff; font-size: 18.500px; letter-spacing: 0; }
.large { width: 59px; height: 59px; border: 3px solid #ddd; font-size: 20px; letter-spacing: 0; }

/* top area */
.main { flex: 1; display: flex; flex-direction: column; }
.topbar { display: flex; justify-content: space-between; align-items: center; height: 101px; padding: 0 34px 1px 44px; background: #322a40; color: #fff; }
.crumbs { font-size: 28px; letter-spacing: -.002em; }
.slash { margin: 0 7px 0 8px; }
.leaf { letter-spacing: -.015em; }
.tabs { display: flex; gap: 30px; height: 92px; padding-left: 59px; border-bottom: 2px solid #d8d8d8; }
.tab { height: 90px; padding: 0 29px; line-height: 88px; font-weight: 500; letter-spacing: -.0195em; color: #3c3c3c; }
.tab.on { color: #7573f7; border-bottom: 4px solid #7573f7; width: 204px; }
.filters { display: flex; gap: 30px; height: 117px; padding: 24px 0 0 39px; border-bottom: 2px solid #dedede; }
.search { display: flex; align-items: center; width: 348px; height: 67px; padding-left: 19px; border: 2px solid #bdbdbd; border-radius: 34px; font-size: 28px; letter-spacing: -.0205em; color: #9e9e9e; }
.search svg { width: 26px; height: 26px; margin-right: 18px; }
.select { display: flex; align-items: center; justify-content: space-between; height: 67px; padding: 0 16px 4px 22px; border: 2px solid #d5d7da; border-radius: 9px; font-weight: 600; letter-spacing: -.015em; color: #000; }
.select i { width: 0; height: 0; border: 9px solid transparent; border-top-color: #757575; border-bottom: 0; margin-top: 5px; }
.day { width: 212px; padding-right: 14px; letter-spacing: -.024em; }
.program { width: 259px; padding-right: 13px; padding-left: 21px; border-color: #7573f7; color: #7573f7; }
.program i { border-top-color: #7573f7; }
.duration { width: 269px; padding-right: 13px; }
.time { width: 176px; padding: 0 13px 0 21px; font-weight: 500; letter-spacing: -.009em; color: #212121; }
.time i { margin-top: 1px; }
.content { display: flex; flex: 1; }

/* activity list */
.list { width: 1006px; height: 1230px; overflow: hidden; color: #000; }
.greet { margin: 0 45px; padding: 38px 0 18px; border-bottom: 3px solid #d6d6d6; font-size: 35px; line-height: 44px; font-weight: 600; letter-spacing: -.018em; text-indent: -1.500px; }
.count { margin: 25.500px 45px 24.500px 44px; line-height: 38px; color: #757575; letter-spacing: -.016em; }
.card { display: flex; justify-content: space-between; padding: 53px 117px 28.500px 45px; border-bottom: 2px solid #dedede; }
.card.enrolled { padding-top: 30.500px; padding-bottom: 41.500px; }
.selected { background: #f2f2f2; }
.badge { display: block; width: 284px; height: 40px; margin-bottom: 22.700px; padding: 1px 0 0 20px; background: #8fd074; color: #fff; font-size: 22px; line-height: 40px; font-weight: 700; letter-spacing: -.001em; }
.card h3 { margin-bottom: 7px; font-size: 35px; line-height: 44px; font-weight: 600; letter-spacing: -.014em; text-indent: -1px; }
.card p { text-indent: -1px; letter-spacing: -.0195em; }
.card .wide { letter-spacing: .001em; }
.addr { color: #757575; }
.vacancy { display: flex; align-items: center; margin-top: 14.500px; letter-spacing: -.023em; }
.vacancy svg { width: 27px; height: 27px; margin-right: 14px; fill: #bdbdbd; }
.period { display: flex; flex-direction: column; align-items: flex-end; gap: 3px; font-size: 22px; line-height: 30px; letter-spacing: -.0288em; }
.period svg { width: 60px; height: 60px; }
.card .period { padding-top: 55px; }

/* map */
.map { position: relative; width: 1005px; height: 1230px; }
.terrain { display: block; width: 1005px; height: 1230px; }
.minor path, .major path, .city path, .border { fill: none; vector-effect: non-scaling-stroke; stroke-linejoin: round; }
.minor path { stroke: #f2dca4; stroke-width: 1.800px; }
.major path { stroke: #eac266; stroke-width: 3.200px; }
.city path { stroke: #f4d68a; stroke-width: 4px; }
.border { stroke: #888; stroke-width: 1.600px; stroke-dasharray: 4 3; }
.shield { fill: #4c7f35; font: 500 17px Roboto, sans-serif; letter-spacing: 0; text-anchor: middle; }
.shield text { fill: #fff; }
.shield .gold { fill: #f8d33c; }
.place { font-family: Roboto, sans-serif; letter-spacing: 0; text-anchor: middle; fill: #555; }
.place text { stroke: #f5f5f5; stroke-width: 4px; stroke-linejoin: round; paint-order: stroke; }
.place circle { fill: #fff; stroke: #4a4a4a; stroke-width: 2px; }
.place .capital { fill: #1c1c1c; }
.place .capital-dot { stroke: #111; stroke-width: 2.600px; }
.pin { position: absolute; display: flex; align-items: center; justify-content: space-between; height: 92px; border-radius: 46px; letter-spacing: -.023em; box-shadow: 0 4px 12px rgba(0,0,0,.7); }
.pin svg { width: 59px; height: 59px; flex: none; }
.pin b { font-weight: 500; }
.pin::after { content: ""; position: absolute; top: 91px; border: 12px solid transparent; border-top-color: inherit; border-bottom: 0; }
.dark { left: 279px; top: 492px; width: 450px; padding: 0 28px 0 38px; background: #000; border-color: #000; color: #fff; white-space: nowrap; }
.dark::after { left: 213px; }
.light { left: 180px; top: 756px; width: 364px; padding: 0 29px 0 137px; background: #fff; border-color: #fff; color: #333; }
.light::after { left: 174px; }
.light b { color: #e4583f; }
.behind { left: 223px; top: 756px; width: 364px; padding-right: 30px; justify-content: flex-end; background: #fff; }
.behind::after { display: none; }
.fullscreen { position: absolute; top: 18px; right: 15px; display: flex; align-items: center; justify-content: center; width: 74px; height: 74px; border-radius: 4px; background: #fff; box-shadow: 0 2px 6px rgba(0,0,0,.3); }
.fullscreen svg { width: 34px; height: 34px; }

/* modal */
.backdrop { position: absolute; inset: 0; display: flex; align-items: center; justify-content: center; background: rgba(0,0,0,.5); }
.modal { width: 1104px; height: 949px; padding-top: 44px; border-radius: 8px; background: #fff; box-shadow: 0 20px 28px -13px rgba(0,0,0,.2), 0 44px 70px 6px rgba(0,0,0,.14), 0 17px 85px 15px rgba(0,0,0,.12); }
.head { display: flex; align-items: flex-start; height: 125px; padding: 0 44.500px 0 43.500px; }
.titles { flex: 1; }
.titles h1 { margin-bottom: 7.500px; font-size: 35px; line-height: 44px; font-weight: 600; letter-spacing: -.0095em; text-indent: -.5px; }
.edit { display: flex; align-items: center; color: #7573f7; letter-spacing: -.021em; }
.edit svg { width: 18px; height: 18px; margin: -3px 0 0 11px; fill: #7573f7; }
.head .period { margin: -8px 37px 0 0; }
.close { width: 44px; height: 44px; fill: #757575; }
.desc { margin-top: 15px; padding-left: 43.500px; letter-spacing: -.0195em; }
.fact { display: flex; align-items: center; height: 37px; padding-left: 42.500px; letter-spacing: -.016em; }
.fact svg { width: 45px; height: 45px; margin: -5px 10.500px 0 0; fill: #212121; }
.fact span { padding-left: 30px; border-left: 2px solid #ececec; }
.where { margin-top: 38px; }
.who { margin-top: 64.500px; letter-spacing: -.029em; }
.attach { display: flex; flex-direction: column; margin-top: 59px; padding-left: 43.500px; }
.attach b { color: #7a7a7a; letter-spacing: .003em; }
.attach span { font-size: 27.500px; line-height: 36px; letter-spacing: -.009em; }
.apply { display: flex; flex-direction: column; align-items: center; margin-top: 27px; padding-top: 52.500px; border-top: 2px solid #e2e2e2; text-align: center; }
.apply h2 { font-size: 34.500px; line-height: 44px; font-weight: 500; letter-spacing: -.0115em; margin-left: -2px; }
.apply p { margin: 20px 0 38px -1px; color: #7a7a7a; letter-spacing: -.0194em; }
.button { position: relative; width: 207px; height: 67px; border-radius: 34px; background: #7573f7; color: #fff; line-height: 65px; font-weight: 500; letter-spacing: -.0285em; }
.cursor { position: absolute; left: 180px; top: 43px; width: 64px; height: 62px; fill: #f2f2f2; stroke: #111; stroke-linejoin: round; stroke-linecap: round; }
.cursor path { stroke-width: 2px; vector-effect: non-scaling-stroke; }
.cursor .crease { fill: none; }

/* enrolment status */
.waiting { position: absolute; left: 1374px; top: 1365px; display: flex; flex-direction: column; align-items: center; width: 1331px; height: 435px; padding-top: 61.500px; border: 6px solid #e8e8e8; border-radius: 20px; background: #fff; text-align: center; }
.waiting h2 { font-size: 42px; line-height: 52px; font-weight: 500; letter-spacing: -.02em; margin-left: -1px; }
.waiting p { margin: 24.500px 0 44.500px -1px; font-size: 29.300px; line-height: 44.500px; letter-spacing: -.0235em; color: #7a7a7a; }
.withdraw { width: 229px; height: 84px; border: 3px solid #7573f7; border-radius: 42px; color: #7573f7; font-size: 30px; line-height: 79px; font-weight: 500; letter-spacing: -.0255em; }
```
